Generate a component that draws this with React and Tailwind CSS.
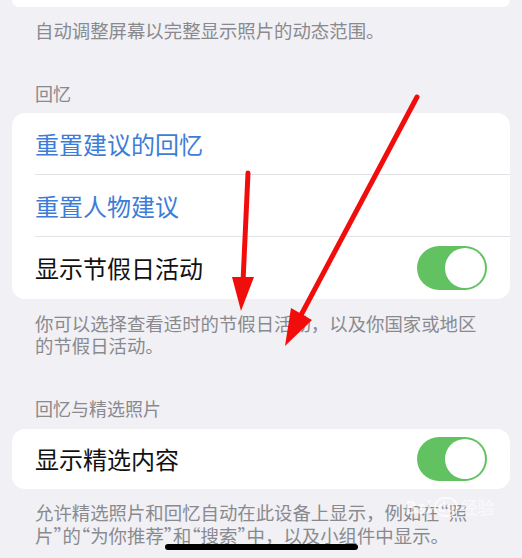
import React from 'react';

const Toggle = () => (
  <div className="w-[70px] h-[44px] rounded-full bg-[#62c262] flex items-center justify-end pr-[2px]">
    <div className="w-[40px] h-[40px] rounded-full bg-white" />
  </div>
);

const Row = ({ children, last, blue, toggle, h = 'h-[62px]' }) => (
  <div className="pl-[23px]">
    <div
      className={`flex items-center justify-between pr-[23px] ${h} ${last ? '' : 'border-b border-[#e2e2e6]'}`}
    >
      <span className={`text-[24px] ${blue ? 'text-[#3d7dd8]' : 'text-[#111]'}`}>{children}</span>
      {toggle && <Toggle />}
    </div>
  </div>
);

// half-width curly quotes
const Q = ({ children }) => <span style={{ fontFeatureSettings: '"halt"' }}>{children}</span>;

// red annotation arrows drawn over the settings list
const Arrows = () => (
  <svg className="absolute inset-0 pointer-events-none" width="522" height="558" viewBox="0 0 522 558">
    <line x1="248" y1="173" x2="243" y2="282" stroke="#f20d0d" strokeWidth="5" strokeLinecap="round" />
    <polygon points="232,277 254,277 241,311" fill="#f20d0d" />
    <line x1="417" y1="97" x2="300" y2="317" stroke="#f20d0d" strokeWidth="5" strokeLinecap="round" />
    <polygon points="291,308 312,320 285,346" fill="#f20d0d" />
  </svg>
);

const App = () => {
  return (
    <div
      className="relative w-[522px] h-[558px] overflow-hidden bg-[#f0f0f5]"
      style={{ fontFamily: '"Noto Sans CJK SC", "Noto Sans", sans-serif' }}
    >
      {/* bottom of the previous group */}
      <div className="mx-[12px] h-[7px] bg-white rounded-b-[13px]" />
      <p className="pt-[12px] px-[35px] text-[18.4px] leading-[22px] text-[#8a8a8e]">
        自动调整屏幕以完整显示照片的动态范围。
      </p>

      {/* Memories */}
      <p className="mt-[41px] px-[35px] text-[18px] leading-[22px] text-[#8a8a8e]">回忆</p>
      <div className="mt-[9px] mx-[12px] bg-white rounded-[13px] overflow-hidden">
        <Row blue>重置建议的回忆</Row>
        <Row blue>重置人物建议</Row>
        <Row last toggle>显示节假日活动</Row>
      </div>
      <p className="mt-[13px] px-[35px] text-[18.4px] leading-[22px] text-[#8a8a8e] whitespace-nowrap">
        你可以选择查看适时的节假日活动，以及你国家或地区
        <br />
        的节假日活动。
      </p>

      {/* Memories and featured photos */}
      <p className="mt-[41px] px-[35px] text-[18px] leading-[22px] text-[#8a8a8e]">回忆与精选照片</p>
      <div className="mt-[10px] mx-[12px] bg-white rounded-[13px] overflow-hidden">
        <Row last toggle h="h-[60px]">显示精选内容</Row>
      </div>
      <p className="mt-[12px] px-[35px] text-[18.4px] leading-[23px] text-[#8a8a8e] whitespace-nowrap">
        允许精选照片和回忆自动在此设备上显示，例如在<Q>“</Q>照
        <br />
        片<Q>”</Q>的<Q>“</Q>为你推荐<Q>”</Q>和<Q>“</Q>搜索<Q>”</Q>中，以及小组件中显示。
      </p>

      {/* watermark */}
      <div className="absolute left-[405px] top-[494px] flex items-center gap-[2px] text-white/70 text-[17px] font-bold pointer-events-none">
        <span>Bai</span>
        <span className="rounded-full border-2 border-white/70 px-[2px] text-[13px] leading-[16px]">du</span>
        <span className="font-normal">经验</span>
      </div>

      {/* home indicator */}
      <div className="absolute left-[165px] top-[544px] w-[193px] h-[6px] rounded-full bg-black" />

      <Arrows />
    </div>
  );
};

export default App;
